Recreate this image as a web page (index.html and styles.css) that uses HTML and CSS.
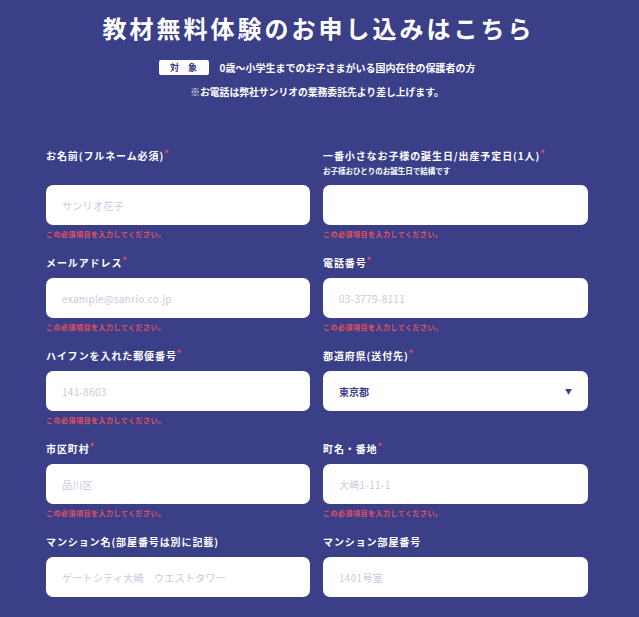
FILE: index.html
```html
<!DOCTYPE html>
<html lang="ja">
<head>
<meta charset="utf-8">
<link rel="stylesheet" href="styles.css">
</head>
<body>
<div class="page">
  <header class="head">
    <h1 class="title">教材無料体験のお申し込みはこちら</h1>
    <div class="target">
      <span class="badge">対象</span>
      <span class="target-text">0歳〜小学生までのお子さまがいる国内在住の保護者の方</span>
    </div>
    <p class="note">※お電話は弊社サンリオの業務委託先より差し上げます。</p>
  </header>

  <form class="form">
    <div class="row">
      <div class="field">
        <div class="label-area"><div class="label">お名前(フルネーム必須)<span class="req">*</span></div></div>
        <div class="input"><span class="ph">サンリオ花子</span></div>
        <div class="error">この必須項目を入力してください。</div>
      </div>
      <div class="field">
        <div class="label-area">
          <div class="label">一番小さなお子様の誕生日/出産予定日(1人)<span class="req">*</span></div>
          <div class="sublabel">お子様おひとりのお誕生日で結構です</div>
        </div>
        <div class="input"></div>
        <div class="error">この必須項目を入力してください。</div>
      </div>
    </div>

    <div class="row">
      <div class="field">
        <div class="label-area"><div class="label">メールアドレス<span class="req">*</span></div></div>
        <div class="input"><span class="ph latin">example@sanrio.co.jp</span></div>
        <div class="error">この必須項目を入力してください。</div>
      </div>
      <div class="field">
        <div class="label-area"><div class="label">電話番号<span class="req">*</span></div></div>
        <div class="input"><span class="ph latin">03-3779-8111</span></div>
        <div class="error">この必須項目を入力してください。</div>
      </div>
    </div>

    <div class="row">
      <div class="field">
        <div class="label-area"><div class="label">ハイフンを入れた郵便番号<span class="req">*</span></div></div>
        <div class="input"><span class="ph latin">141-8603</span></div>
        <div class="error">この必須項目を入力してください。</div>
      </div>
      <div class="field">
        <div class="label-area"><div class="label">都道府県(送付先)<span class="req">*</span></div></div>
        <div class="input select"><span class="value">東京都</span><span class="arrow">▼</span></div>
        <div class="error"></div>
      </div>
    </div>

    <div class="row">
      <div class="field">
        <div class="label-area"><div class="label">市区町村<span class="req">*</span></div></div>
        <div class="input"><span class="ph">品川区</span></div>
        <div class="error">この必須項目を入力してください。</div>
      </div>
      <div class="field">
        <div class="label-area"><div class="label">町名・番地<span class="req">*</span></div></div>
        <div class="input"><span class="ph latin">大崎1-11-1</span></div>
        <div class="error">この必須項目を入力してください。</div>
      </div>
    </div>

    <div class="row">
      <div class="field">
        <div class="label-area"><div class="label">マンション名(部屋番号は別に記載)</div></div>
        <div class="input"><span class="ph">ゲートシティ大崎　ウエストタワー</span></div>
      </div>
      <div class="field">
        <div class="label-area"><div class="label">マンション部屋番号</div></div>
        <div class="input"><span class="ph latin">1401号室</span></div>
      </div>
    </div>
  </form>
</div>
</body>
</html>
```

FILE: styles.css
```css
html, body {
  margin: 0;
  padding: 0;
  background: #3a3f88;
}
body {
  font-family: "Noto Sans CJK JP", "Noto Sans", sans-serif;
  color: #ffffff;
}
.page {
  width: 542px;
  margin: 0 0 0 46px;
  padding-top: 10px;
}
.head {
  display: flex;
  flex-direction: column;
  align-items: center;
}
.title {
  margin: 0;
  font-size: 24px;
  line-height: 36px;
  font-weight: 700;
  letter-spacing: 3px;
  padding-left: 3px;
}
.target {
  display: flex;
  align-items: center;
  gap: 11px;
  margin-top: 14px;
  height: 15px;
}
.badge {
  background: #ffffff;
  color: #3a3f88;
  width: 50px;
  height: 15px;
  border-radius: 2px;
  font-size: 9px;
  font-weight: 700;
  line-height: 15px;
  text-align: center;
  letter-spacing: 9px;
  text-indent: 9px;
}
.target-text {
  font-size: 10px;
  font-weight: 700;
  line-height: 15px;
}
.note {
  margin: 10px 0 0;
  font-size: 9.8px;
  line-height: 14px;
  font-weight: 700;
}
.form {
  margin-top: 50px;
  display: flex;
  flex-direction: column;
  gap: 17px;
}
.row {
  display: grid;
  grid-template-columns: 264px 265px;
  column-gap: 13px;
}
.field {
  display: flex;
  flex-direction: column;
}
.label-area {
  flex: 1;
  margin-bottom: 8px;
}
.label {
  font-size: 10px;
  line-height: 14px;
  font-weight: 700;
  letter-spacing: 0.9px;
  white-space: nowrap;
}
.req {
  color: #e8505f;
  font-size: 9px;
  vertical-align: top;
  line-height: 10px;
}
.sublabel {
  font-size: 7.5px;
  line-height: 13px;
  font-weight: 700;
  margin-top: 1px;
}
.input {
  height: 40px;
  background: #ffffff;
  border-radius: 7px;
  display: flex;
  align-items: center;
  padding: 0 16px;
}
.ph {
  color: #c9cadd;
  font-size: 10px;
  letter-spacing: 0.3px;
}
.latin {
  font-family: "Noto Sans CJK JP", sans-serif;
}
.select {
  justify-content: space-between;
  padding-right: 16px;
}
.value {
  color: #3a3f88;
  font-size: 10px;
  font-weight: 700;
}
.arrow {
  color: #3a3f88;
  font-size: 7px;
}
.error {
  margin-top: 4px;
  height: 10px;
  font-size: 7px;
  line-height: 10px;
  color: #e8505f;
  font-weight: 700;
  letter-spacing: 0.5px;
}
```
